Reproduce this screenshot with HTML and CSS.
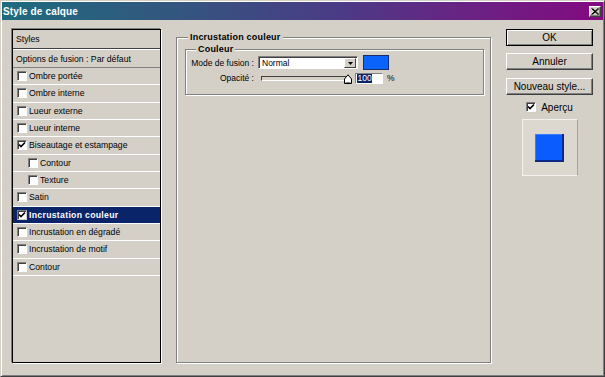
FILE: index.html
```html
<!DOCTYPE html>
<html lang="fr">
<head>
<meta charset="utf-8">
<title>Style de calque</title>
<link rel="stylesheet" href="styles.css">
</head>
<body>
<div class="window">
  <div class="titlebar">
    <span class="title">Style de calque</span>
    <span class="close"><svg width="8" height="7" viewBox="0 0 8 7"><path d="M0.5 0.5 L7 6.5 M1.5 0.5 L8 6.5 M7 0.5 L0.5 6.5 M8 0.5 L1.5 6.5" stroke="#000" stroke-width="1"/></svg></span>
  </div>
  <div class="content">
    <div class="styles-panel">
      <div class="hdr">Styles</div>
      <div class="opt">Options de fusion : Par défaut</div>
      <ul class="list">
        <li class="row"><span class="cb"></span>Ombre portée</li>
        <li class="row"><span class="cb"></span>Ombre interne</li>
        <li class="row"><span class="cb"></span>Lueur externe</li>
        <li class="row"><span class="cb"></span>Lueur interne</li>
        <li class="row"><span class="cb"><svg class="chk" viewBox="0 0 8 8"><path d="M1 3.5 L3 5.5 L7 1.5" fill="none" stroke="#000" stroke-width="1.6"/></svg></span>Biseautage et estampage</li>
        <li class="row sub"><span class="cb"></span>Contour</li>
        <li class="row sub"><span class="cb"></span>Texture</li>
        <li class="row"><span class="cb"></span>Satin</li>
        <li class="row sel"><span class="cb"><svg class="chk" viewBox="0 0 8 8"><path d="M1 3.5 L3 5.5 L7 1.5" fill="none" stroke="#000" stroke-width="1.6"/></svg></span>Incrustation couleur</li>
        <li class="row"><span class="cb"></span>Incrustation en dégradé</li>
        <li class="row"><span class="cb"></span>Incrustation de motif</li>
        <li class="row"><span class="cb"></span>Contour</li>
      </ul>
    </div>

    <fieldset class="grp outer">
      <legend>Incrustation couleur</legend>
      <fieldset class="grp inner">
        <legend>Couleur</legend>
        <div class="frow">
          <span class="lbl">Mode de fusion :</span>
          <span class="select"><span class="sel-text">Normal</span><span class="arrow"><svg width="5" height="3" viewBox="0 0 5 3"><path d="M0 0 H5 L2.5 3 Z" fill="#000"/></svg></span></span>
          <span class="swatch"></span>
        </div>
        <div class="frow r2">
          <span class="lbl">Opacité :</span>
          <span class="slider"><span class="track"></span><svg class="thumb" width="8" height="10" viewBox="0 0 8 10"><path d="M0.5 9.5 V5 L4 0.8 L7.5 5 V9.5 Z" fill="#fff" stroke="#000" stroke-width="1"/><path d="M1.5 8.5 H6.5" stroke="#808080"/></svg></span>
          <span class="num"><span class="hl">100</span></span>
          <span class="pct">%</span>
        </div>
      </fieldset>
    </fieldset>

    <div class="side">
      <div class="btn def">OK</div>
      <div class="btn b2">Annuler</div>
      <div class="btn b3">Nouveau style...</div>
      <div class="apercu"><span class="cb"><svg class="chk" viewBox="0 0 8 8"><path d="M1 3.5 L3 5.5 L7 1.5" fill="none" stroke="#000" stroke-width="1.6"/></svg></span>Aperçu</div>
      <div class="preview"><span class="square"></span></div>
    </div>
  </div>
</div>
</body>
</html>
```

FILE: styles.css
```css
* { box-sizing: border-box; }
html, body { margin: 0; padding: 0; }
body {
  width: 605px;
  height: 377px;
  overflow: hidden;
  background: #d4d0c8;
  font-family: "Liberation Sans", Arial, sans-serif;
  color: #000;
}
.window {
  width: 605px;
  height: 377px;
  border: 1px solid;
  border-color: #d4d0c8 #404040 #404040 #d4d0c8;
  box-shadow: inset 1px 1px 0 #fff, inset -1px -1px 0 #808080;
  padding: 1px;
  display: flex;
  flex-direction: column;
}
.titlebar {
  height: 18px;
  flex: none;
  background: linear-gradient(to right, #1f6b7e 0%, #34557f 30%, #4a3c86 55%, #6a2283 78%, #840a80 100%);
  display: flex;
  align-items: center;
  justify-content: space-between;
  padding: 0 2px 0 1px;
}
.title {
  color: #fff;
  font-weight: bold;
  font-size: 10px;
  letter-spacing: 0.15px;
}
.close {
  width: 12px;
  height: 11px;
  background: #d4d0c8;
  border: 1px solid;
  border-color: #fff #404040 #404040 #fff;
  box-shadow: inset -1px -1px 0 #808080;
  display: flex;
  align-items: center;
  justify-content: center;
}
.close svg { display: block; margin-left: -1px; }

.content {
  flex: 1;
  display: flex;
  align-items: flex-start;
  padding: 9px 0 0 10px;
}

/* Styles list */
.styles-panel {
  width: 149px;
  height: 334px;
  flex: none;
  border: 1px solid #000;
  box-shadow: -1px -1px 0 #808080, 1px 1px 0 #fff;
  font-size: 8.7px;
}
.hdr {
  height: 19px;
  padding-left: 3px;
  display: flex;
  align-items: center;
  border-bottom: 1px solid #404040;
}
.opt {
  height: 19px;
  padding-left: 3px;
  display: flex;
  align-items: center;
  border-top: 1px solid #fff;
  border-bottom: 1px solid #808080;
}
.list { list-style: none; margin: 0; padding: 0; }
.row {
  height: 17.33px;
  border-bottom: 1px solid #fff;
  display: flex;
  align-items: center;
  padding-left: 4px;
}
.row.sub { padding-left: 15px; }
.row.sel {
  background: #0a246a;
  color: #fff;
  font-weight: bold;
  letter-spacing: 0.3px;
}
.cb {
  width: 10px;
  height: 10px;
  flex: none;
  background: #fff;
  border: 1px solid;
  border-color: #808080 #fff #fff #808080;
  box-shadow: inset 1px 1px 0 #404040;
  margin-right: 2px;
  display: flex;
}
.row.sel .cb { border-color: #808080 #d4d0c8 #d4d0c8 #808080; }
.chk { width: 8px; height: 8px; display: block; }

/* Group boxes */
fieldset.grp {
  margin: 0;
  padding: 0;
  min-width: 0;
  border: 1px solid #808080;
  box-shadow: inset 1px 1px 0 #fff, 1px 1px 0 #fff;
}
fieldset.grp > legend {
  padding: 0 2px;
  font-weight: bold;
  font-size: 9px;
  line-height: 11px;
  letter-spacing: 0.2px;
  background: #d4d0c8;
}
.outer {
  flex: none;
  width: 315px;
  height: 331px;
  margin: 3px 0 0 15px !important;
}
.outer > legend { margin-left: 11px; }
.inner {
  width: 299px;
  height: 51px;
  margin: 1px 0 0 8px !important;
  font-size: 8.5px;
}
.inner > legend { margin-left: 10px; }

.frow {
  display: flex;
  align-items: center;
  height: 15px;
}
.frow.r2 { height: 12px; margin-top: 2px; }
.lbl {
  width: 68px;
  text-align: right;
  margin-right: 4px;
  flex: none;
  white-space: nowrap;
}
.select {
  width: 100px;
  height: 13px;
  background: #fff;
  border: 1px solid;
  border-color: #808080 #fff #fff #808080;
  box-shadow: inset 1px 1px 0 #404040;
  display: flex;
  align-items: center;
  justify-content: space-between;
  padding: 1px 1px 0 3px;
}
.arrow {
  width: 12px;
  height: 10px;
  background: #d4d0c8;
  border: 1px solid;
  border-color: #fff #404040 #404040 #fff;
  display: flex;
  align-items: center;
  justify-content: center;
}
.arrow svg { display: block; }
.swatch {
  width: 26px;
  height: 15px;
  margin-left: 5px;
  background: #0a64fc;
  border: 1px solid #1a2d6a;
}
.slider {
  position: relative;
  width: 94px;
  height: 12px;
  display: flex;
  align-items: center;
}
.track {
  width: 86px;
  height: 5px;
  margin-left: 3px;
  background: #d4d0c8;
  border: 1px solid;
  border-color: #404040 #fff #fff #404040;
}
.thumb {
  position: absolute;
  left: 86px;
  top: 2px;
}
.num {
  width: 28px;
  height: 11px;
  margin-left: 3px;
  background: #fff;
  border: 1px solid;
  border-color: #808080 #fff #fff #808080;
  display: flex;
  align-items: center;
  padding-left: 1px;
}
.hl {
  background: #0a246a;
  color: #fff;
  line-height: 9px;
  padding: 0 0.5px;
}
.pct { margin-left: 4px; }

/* Right side */
.side {
  width: 87px;
  flex: none;
  margin-left: 15px;
  display: flex;
  flex-direction: column;
  align-items: center;
  font-size: 10px;
}
.btn {
  width: 87px;
  height: 17px;
  display: flex;
  align-items: center;
  justify-content: center;
  background: #d4d0c8;
  border: 1px solid;
  border-color: #fff #404040 #404040 #fff;
  box-shadow: inset -1px -1px 0 #808080;
}
.btn.def {
  border-color: #000;
  box-shadow: inset 1px 1px 0 #fff, inset -1px -1px 0 #808080;
}
.btn.b2 { margin-top: 7px; }
.btn.b3 { margin-top: 8px; }
.apercu {
  display: flex;
  align-items: center;
  margin-top: 7px;
  height: 10px;
}
.apercu .cb { margin-right: 5px; }
.preview {
  width: 56px;
  height: 57px;
  margin-top: 7px;
  border: 1px solid;
  border-color: #f4f2ee #a8a49c #f4f2ee #f4f2ee;
  background: #dcd8d0;
  display: flex;
  align-items: center;
  justify-content: center;
}
.square {
  width: 29px;
  height: 28px;
  background: #0a5cff;
  box-shadow: inset -2px -2px 0 #0b2a86, inset 1px 1px 0 #3c7cff;
  margin-left: -1px;
}
```
